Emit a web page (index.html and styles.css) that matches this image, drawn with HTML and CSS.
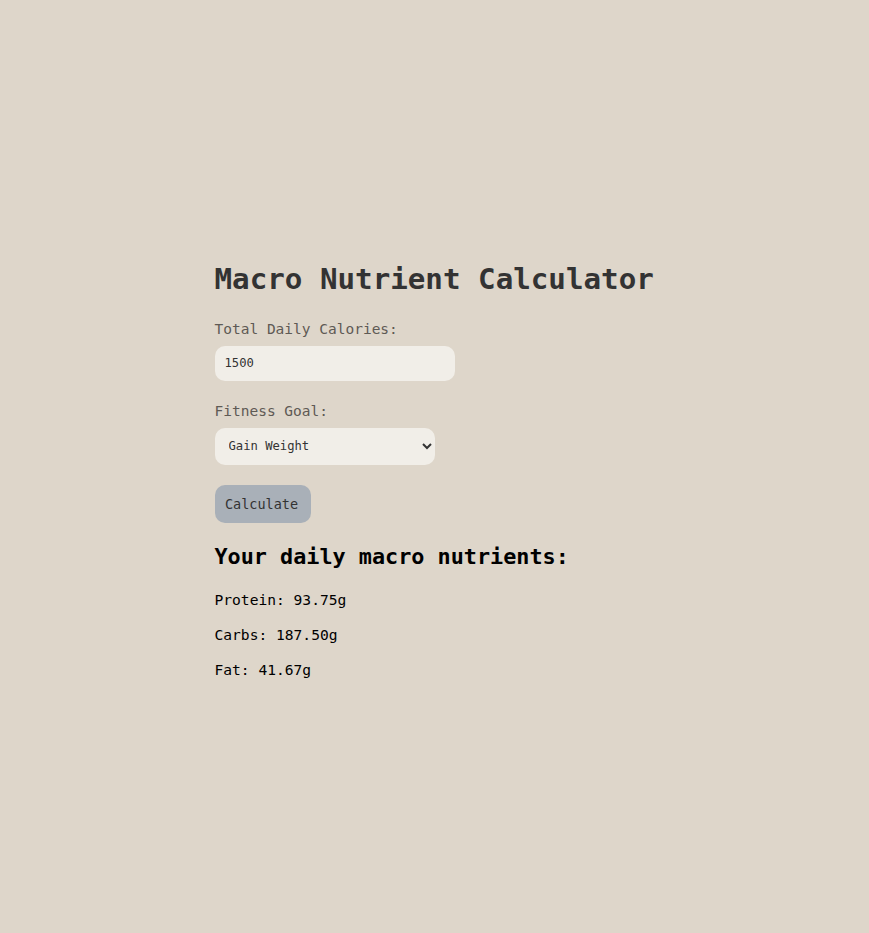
FILE: index.html
```html
<!DOCTYPE html>
<html>
<head>
<meta charset="utf-8">
<link rel="stylesheet" href="styles.css">
</head>
<body>
<main class="calc">
  <h1 class="title">Macro Nutrient Calculator</h1>
  <label class="label" for="cal">Total Daily Calories:</label>
  <input class="field" id="cal" type="text" value="1500">
  <label class="label" for="goal">Fitness Goal:</label>
  <div class="select-wrap">
    <select class="select" id="goal">
      <option>Gain Weight</option>
    </select>
  </div>
  <button class="btn">Calculate</button>
  <h2 class="subtitle">Your daily macro nutrients:</h2>
  <p class="result">Protein: 93.75g</p>
  <p class="result">Carbs: 187.50g</p>
  <p class="result">Fat: 41.67g</p>
</main>
</body>
</html>
```
FILE: styles.css
```css
html, body {
  margin: 0;
  padding: 0;
}
body {
  background: #ded6ca;
  font-family: "DejaVu Sans Mono", "Liberation Mono", monospace;
  min-height: 100vh;
  display: flex;
  justify-content: center;
  align-items: center;
}
.calc {
  width: 440px;
  display: flex;
  flex-direction: column;
  align-items: flex-start;
  padding-top: 22px;
}
.title {
  margin: 0 0 22px;
  font-size: 29.2px;
  line-height: 36px;
  color: #333;
  font-weight: bold;
}
.label {
  font-size: 14.5px;
  line-height: 20px;
  color: #5e5a55;
  margin-bottom: 7px;
}
.field {
  box-sizing: border-box;
  width: 240px;
  height: 35px;
  border: none;
  border-radius: 10px;
  background: #f1eee8;
  padding: 0 10px;
  font-family: inherit;
  font-size: 12.2px;
  color: #333;
  margin-bottom: 20px;
  outline: none;
}
.select-wrap {
  margin-bottom: 20px;
}
.select {
  box-sizing: border-box;
  width: 220px;
  height: 37px;
  border: none;
  border-radius: 10px;
  background: #f1eee8;
  padding: 0 10px;
  font-family: inherit;
  font-size: 12.2px;
  color: #333;
}
.btn {
  box-sizing: border-box;
  width: 96px;
  height: 38px;
  border: none;
  border-radius: 10px;
  background: #a9b0b8;
  color: #333;
  font-family: inherit;
  font-size: 13.5px;
  padding: 0 2px 0 0;
  margin-bottom: 20px;
}
.subtitle {
  margin: 0 0 19px;
  font-size: 21.8px;
  line-height: 28px;
  color: #000;
  font-weight: bold;
}
.result {
  margin: 0 0 15px;
  font-size: 14.6px;
  line-height: 20px;
  color: #000;
}
```
